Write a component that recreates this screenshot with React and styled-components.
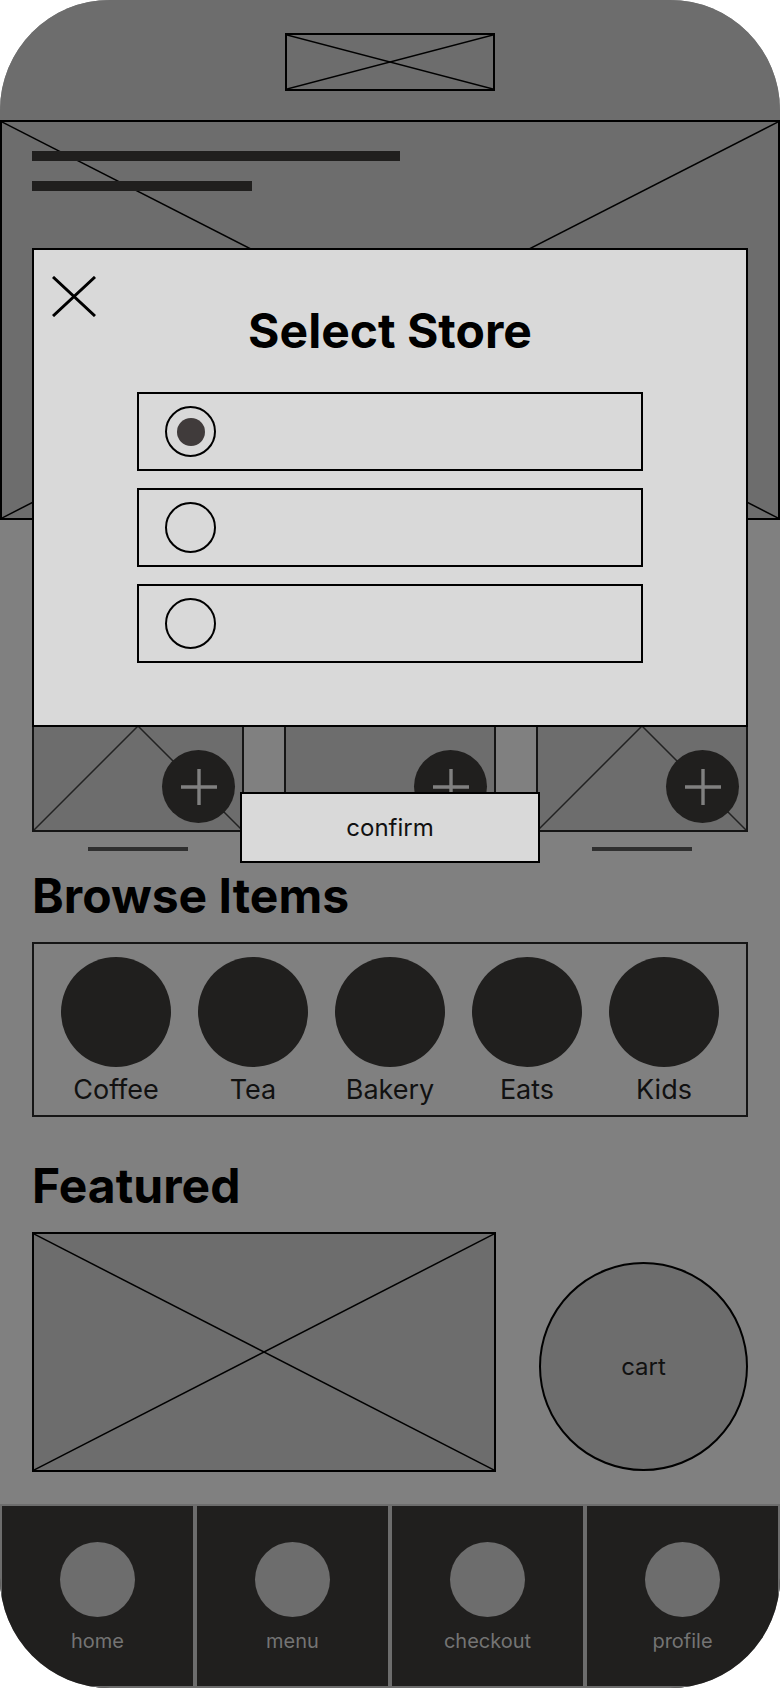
import React from 'react';
import styled, { createGlobalStyle } from 'styled-components';

const GlobalStyle = createGlobalStyle`
  * { box-sizing: border-box; }
  body {
    margin: 0;
    background: #ffffff;
    font-family: Inter, "Liberation Sans", sans-serif;
  }
`;

const Phone = styled.div`
  position: relative;
  width: 780px;
  height: 1688px;
  border-radius: 110px;
  overflow: hidden;
  background: #808080;
  display: flex;
  flex-direction: column;
`;

const Header = styled.header`
  height: 120px;
  flex: none;
  background: #6d6d6d;
  display: flex;
  justify-content: center;
  align-items: flex-start;
  padding-top: 33px;
`;

const Logo = styled.div`
  position: relative;
  width: 210px;
  height: 58px;
  border: 2px solid #000;
`;

const Hero = styled.section`
  position: relative;
  height: 400px;
  flex: none;
  background: #6d6d6d;
  border: 2px solid #000;
  padding: 29px 30px;
  display: flex;
  flex-direction: column;
  gap: 20px;
`;

const TextBar = styled.div`
  position: relative;
  width: ${(p) => p.$w}px;
  height: 10px;
  background: #201f1e;
`;

const CrossSvg = styled.svg`
  position: absolute;
  inset: 0;
  width: 100%;
  height: 100%;
  line {
    stroke: ${(p) => p.$color || '#000'};
    stroke-width: ${(p) => p.$stroke || 1.5}px;
    vector-effect: non-scaling-stroke;
  }
`;

const Cross = ({ color, stroke }) => (
  <CrossSvg viewBox="0 0 100 100" preserveAspectRatio="none" $color={color} $stroke={stroke}>
    <line x1="0" y1="0" x2="100" y2="100" />
    <line x1="100" y1="0" x2="0" y2="100" />
  </CrossSvg>
);

const Content = styled.main`
  flex: 1;
  padding: 0 32px;
  display: flex;
  flex-direction: column;
`;

const Products = styled.div`
  margin-top: 100px;
  display: grid;
  grid-template-columns: repeat(3, 212px);
  column-gap: 40px;
`;

const ProductCol = styled.div`
  display: flex;
  flex-direction: column;
  align-items: center;
`;

const ProductCard = styled.div`
  position: relative;
  width: 212px;
  height: 212px;
  background: #6d6d6d;
  border: 2px solid #151515;
`;

const AddButton = styled.button`
  position: absolute;
  right: 7px;
  bottom: 7px;
  width: 73px;
  height: 73px;
  border-radius: 50%;
  border: none;
  padding: 0;
  background: #201f1e;
  display: flex;
  align-items: center;
  justify-content: center;
`;

const Underline = styled.div`
  margin-top: 15px;
  width: 100px;
  height: 4px;
  background: #2f2f2f;
`;

const Heading = styled.h2`
  margin: ${(p) => p.$top}px 0 0;
  font-size: 48px;
  line-height: 58px;
  font-weight: 700;
  color: #000;
`;

const CategoryBox = styled.div`
  margin-top: 17px;
  border: 2px solid #151515;
  padding: 13px 0 9px;
  display: flex;
  justify-content: space-evenly;
`;

const Category = styled.div`
  width: 110px;
  display: flex;
  flex-direction: column;
  align-items: center;
  gap: 7px;
`;

const CategoryDot = styled.div`
  width: 110px;
  height: 110px;
  border-radius: 50%;
  background: #201f1e;
`;

const CategoryLabel = styled.span`
  font-size: 27px;
  line-height: 32px;
  color: #111;
  white-space: nowrap;
`;

const FeaturedRow = styled.div`
  margin-top: 17px;
  display: flex;
  justify-content: space-between;
  align-items: flex-end;
`;

const FeaturedImage = styled.div`
  position: relative;
  width: 464px;
  height: 240px;
  background: #6d6d6d;
  border: 2px solid #000;
`;

const CartCircle = styled.button`
  width: 209px;
  height: 209px;
  margin-bottom: 1px;
  border-radius: 50%;
  border: 2px solid #000;
  background: #6d6d6d;
  font-family: Inter, "Liberation Sans", sans-serif;
  font-size: 24px;
  color: #111;
  padding: 0;
`;

const Nav = styled.nav`
  height: 184px;
  flex: none;
  display: grid;
  grid-template-columns: repeat(4, 1fr);
`;

const NavItem = styled.div`
  background: #201f1e;
  border: 2px solid #6d6d6d;
  padding-top: 36px;
  display: flex;
  flex-direction: column;
  align-items: center;
  gap: 12px;
`;

const NavIcon = styled.div`
  width: 75px;
  height: 75px;
  border-radius: 50%;
  background: #6d6d6d;
`;

const NavLabel = styled.span`
  font-size: 20px;
  line-height: 24px;
  color: #747474;
`;

/* modal layer */

const Overlay = styled.div`
  position: absolute;
  top: 248px;
  left: 32px;
  width: 716px;
  z-index: 10;
  display: flex;
  flex-direction: column;
  align-items: center;
`;

const Modal = styled.div`
  width: 716px;
  height: 479px;
  background: #d9d9d9;
  border: 2px solid #000;
  padding: 26px 18px;
  display: flex;
  flex-direction: column;
  align-items: center;
`;

const ModalHeader = styled.div`
  align-self: stretch;
  display: grid;
  grid-template-columns: 1fr auto 1fr;
  align-items: start;
`;

const CloseButton = styled.button`
  width: 44px;
  height: 41px;
  padding: 0;
  border: none;
  background: none;
  justify-self: start;
  display: block;
`;

const Title = styled.h1`
  margin: 26px 0 0;
  font-size: 48px;
  line-height: 58px;
  font-weight: 700;
  color: #000;
  white-space: nowrap;
`;

const Options = styled.div`
  margin-top: 32px;
  display: flex;
  flex-direction: column;
  gap: 17px;
`;

const Option = styled.label`
  width: 506px;
  height: 79px;
  border: 2px solid #000;
  padding-left: 26px;
  display: flex;
  align-items: center;
`;

const Radio = styled.span`
  width: 51px;
  height: 51px;
  border-radius: 50%;
  border: 2px solid #000;
  display: flex;
  align-items: center;
  justify-content: center;
  &::after {
    content: '';
    width: 28px;
    height: 28px;
    border-radius: 50%;
    background: ${(p) => (p.$checked ? '#403b3b' : 'transparent')};
  }
`;

const ConfirmButton = styled.button`
  margin-top: 65px;
  width: 300px;
  height: 71px;
  background: #d9d9d9;
  border: 2px solid #000;
  font-family: Inter, "Liberation Sans", sans-serif;
  font-size: 24px;
  color: #111;
  padding: 0;
`;

const PlusIcon = () => (
  <svg width="36" height="36" viewBox="0 0 36 36">
    <path d="M18 0v36M0 18h36" stroke="#808080" strokeWidth="3.4" />
  </svg>
);

const CloseIcon = () => (
  <svg width="44" height="41" viewBox="0 0 44 41">
    <path d="M1 1L43 40M43 1L1 40" stroke="#000" strokeWidth="3" />
  </svg>
);

const products = [{ crossed: true }, { crossed: false }, { crossed: true }];
const categories = ['Coffee', 'Tea', 'Bakery', 'Eats', 'Kids'];
const navItems = ['home', 'menu', 'checkout', 'profile'];
const stores = [true, false, false];

export default function App() {
  return (
    <>
      <GlobalStyle />
      <Phone>
        <Header>
          <Logo>
            <Cross stroke={1.5} />
          </Logo>
        </Header>

        <Hero>
          <Cross stroke={1.5} />
          <TextBar $w={368} />
          <TextBar $w={220} />
        </Hero>

        <Content>
          <Products>
            {products.map((p, i) => (
              <ProductCol key={i}>
                <ProductCard>
                  {p.crossed && <Cross color="#222" stroke={1.5} />}
                  <AddButton>
                    <PlusIcon />
                  </AddButton>
                </ProductCard>
                <Underline />
              </ProductCol>
            ))}
          </Products>

          <Heading $top={16}>Browse Items</Heading>
          <CategoryBox>
            {categories.map((c) => (
              <Category key={c}>
                <CategoryDot />
                <CategoryLabel>{c}</CategoryLabel>
              </Category>
            ))}
          </CategoryBox>

          <Heading $top={40}>Featured</Heading>
          <FeaturedRow>
            <FeaturedImage>
              <Cross stroke={1.5} />
            </FeaturedImage>
            <CartCircle>cart</CartCircle>
          </FeaturedRow>
        </Content>

        <Nav>
          {navItems.map((n) => (
            <NavItem key={n}>
              <NavIcon />
              <NavLabel>{n}</NavLabel>
            </NavItem>
          ))}
        </Nav>

        <Overlay>
          <Modal>
            <ModalHeader>
              <CloseButton>
                <CloseIcon />
              </CloseButton>
              <Title>Select Store</Title>
            </ModalHeader>
            <Options>
              {stores.map((checked, i) => (
                <Option key={i}>
                  <Radio $checked={checked} />
                </Option>
              ))}
            </Options>
          </Modal>
          <ConfirmButton>confirm</ConfirmButton>
        </Overlay>
      </Phone>
    </>
  );
}
